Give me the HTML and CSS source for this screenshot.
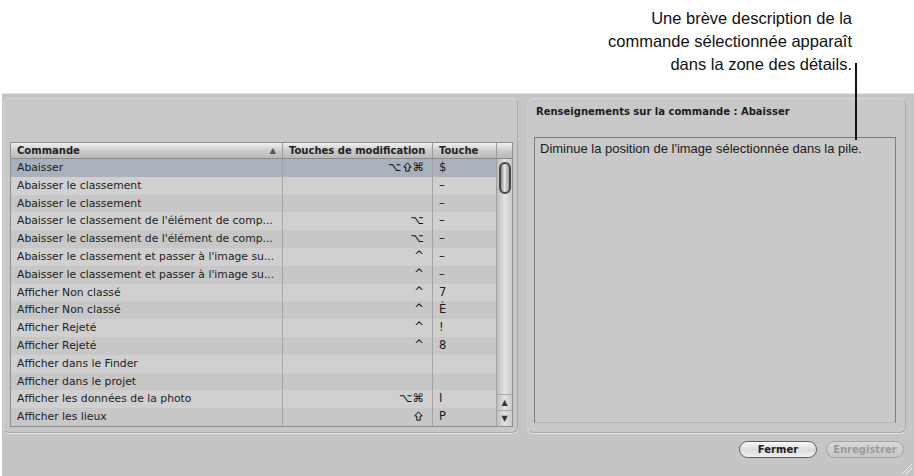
FILE: index.html
```html
<!DOCTYPE html>
<html lang="fr">
<head>
  <meta charset="UTF-8" />
  <title>Commandes</title>
  <link rel="stylesheet" href="styles.css">
</head>
<body>
  <div class="callout">
    <p>Une brève description de la<br>commande sélectionnée apparaît<br>dans la zone des détails.</p>
    <div class="leader"></div>
  </div>

  <div class="window">
    <div class="panels">
      <div class="panel panel-list">
        <div class="table">
          <div class="thead">
            <div class="th sorted">Commande <span class="arrow">▲</span></div>
            <div class="th">Touches de modification</div>
            <div class="th">Touche</div>
            <div class="th"></div>
          </div>
          <div class="tbody">
            <div class="rows" id="rows"></div>
            <div class="scrollbar">
              <div class="thumb"></div>
              <div class="track"></div>
              <div class="btn up">▲</div>
              <div class="btn down">▼</div>
            </div>
          </div>
        </div>
      </div>

      <div class="panel panel-info">
        <div class="info-title">Renseignements sur la commande : Abaisser</div>
        <div class="info-box">Diminue la position de l'image sélectionnée dans la pile.</div>
      </div>
    </div>

    <div class="actions">
      <button class="pill">Fermer</button>
      <button class="pill" disabled>Enregistrer</button>
    </div>
    <div class="grip"></div>
  </div>

  <script>
    // shift key drawn as an outline arrow
    const SHIFT = '<svg class="shift" width="9" height="10" viewBox="0 0 9 10"><path d="M4.5 0.8 L8.3 5 H6.2 V9.2 H2.8 V5 H0.7 Z" fill="none" stroke="#111" stroke-width="1"/></svg>';
    const commandes = [
      ['Abaisser', '⌥' + SHIFT + '⌘', '$'],
      ['Abaisser le classement', '', '–'],
      ['Abaisser le classement', '', '–'],
      ["Abaisser le classement de l'élément de comp...", '⌥', '–'],
      ["Abaisser le classement de l'élément de comp...", '⌥', '–'],
      ["Abaisser le classement et passer à l'image su...", '^', '–'],
      ["Abaisser le classement et passer à l'image su...", '^', '–'],
      ['Afficher Non classé', '^', '7'],
      ['Afficher Non classé', '^', 'È'],
      ['Afficher Rejeté', '^', '!'],
      ['Afficher Rejeté', '^', '8'],
      ['Afficher dans le Finder', '', ''],
      ['Afficher dans le projet', '', ''],
      ['Afficher les données de la photo', '⌥⌘', 'I'],
      ['Afficher les lieux', SHIFT, 'P']
    ];

    const rows = document.getElementById('rows');
    commandes.forEach((c, i) => {
      const row = document.createElement('div');
      row.className = 'row' + (i === 0 ? ' selected' : '');
      c.forEach((txt, j) => {
        const cell = document.createElement('div');
        cell.className = 'td td' + j;
        if (j === 1) cell.innerHTML = txt;
        else cell.textContent = txt;
        row.appendChild(cell);
      });
      rows.appendChild(row);
    });
  </script>
</body>
</html>
```

FILE: styles.css
```css
body { margin: 0; background: #fff; font-family: "DejaVu Sans", sans-serif; }

.callout { position: relative; height: 93px; }
.callout p { margin: 0; padding: 7px 62px 0 0; text-align: right; font-family: "Liberation Sans", Arial, sans-serif; font-size: 16.5px; line-height: 23px; color: #111; }
.leader { position: absolute; left: 855px; top: 63px; width: 2px; height: 77px; background: #111; z-index: 2; }

.window { position: relative; height: 382px; margin-left: 2px; background: #c5c5c5; border-top: 1px solid #e2e2e2; }
.panels { display: flex; gap: 9px; padding: 4px 0 0 1px; }
.panel { height: 333px; border: 1px solid #a9a9a9; border-top-color: #d8d8d8; border-left-color: #d0d0d0; border-radius: 6px; background: #c8c8c8; box-shadow: 0 1px 0 #e4e4e4; }
.panel-list { width: 513px; }
.panel-info { width: 377px; }

/* table */
.table { margin: 43px 0 0 6px; width: 501px; border: 1px solid #8e8e8e; font-size: 10.8px; color: #1c1c1c; }
.thead { display: grid; grid-template-columns: 272px 150px 64px 15px; height: 15px; background: linear-gradient(#f0f0f0, #c9c9c9 55%, #b9b9b9); border-bottom: 1px solid #8a8a8a; font-size: 10px; }
.th { font-weight: bold; line-height: 15px; padding-left: 6px; border-right: 1px solid #9c9c9c; color: #222; }
.th:last-child { border-right: 0; }
.th.sorted { position: relative; }
.arrow { position: absolute; right: 6px; font-size: 8px; color: #555; }

.tbody { display: flex; }
.rows { width: 486px; }
.row { display: grid; grid-template-columns: 272px 150px 64px; height: 17.8px; line-height: 17.8px; background: #c7c7c7; }
.row:nth-child(even) { background: #d0d0d0; }
.row.selected { background: #a8b1bc; }
.td { border-right: 1px solid #a3a3a3; white-space: nowrap; overflow: hidden; }
.td0 { padding-left: 6px; }
.td1 { text-align: right; padding-right: 8px; font-size: 11.5px; color: #111; }
.td2 { padding-left: 6px; font-size: 11.5px; }
.shift { margin: 0 1px; vertical-align: -1px; }

.scrollbar { width: 15px; display: flex; flex-direction: column; background: linear-gradient(90deg, #bdbdbd, #e2e2e2 50%, #c9c9c9); }
.thumb { margin: 3px 1px 0 2px; height: 28px; border: 2px solid #4a4a4a; border-radius: 7px; background: linear-gradient(90deg, #888, #e8e8e8 45%, #9a9a9a); }
.track { flex: 1; }
.btn { height: 15px; text-align: center; font-size: 8px; line-height: 15px; color: #333; border-top: 1px solid #a8a8a8; }

/* details */
.info-title { padding: 7px 0 0 8px; font-size: 10px; font-weight: bold; color: #1c1c1c; }
.info-box { margin: 20px 0 0 6px; width: 355px; height: 281px; padding: 3px 0 0 5px; border: 1px solid #7d7d7d; border-bottom-color: #b4b4b4; background: #c9c9c9; font-family: "Liberation Sans", Arial, sans-serif; font-size: 13px; color: #1a1a1a; }

/* buttons */
.actions { display: flex; justify-content: flex-end; gap: 9px; padding: 8px 10px 0 0; }
.pill { width: 78px; height: 17px; padding: 0; border: 1px solid #5e5e5e; border-radius: 9px; background: linear-gradient(#fafafa, #dcdcdc 50%, #eeeeee); font-family: "DejaVu Sans", sans-serif; font-size: 10px; font-weight: bold; color: #222; }
.pill:disabled { border-color: #a3a3a3; background: linear-gradient(#d8d8d8, #c6c6c6); color: #9a9a9a; }

.grip { position: absolute; right: 2px; bottom: 2px; width: 10px; height: 10px; background: linear-gradient(135deg, transparent 45%, #eee 46%, #eee 52%, transparent 53%, transparent 65%, #eee 66%, #eee 72%, transparent 73%); }
```
